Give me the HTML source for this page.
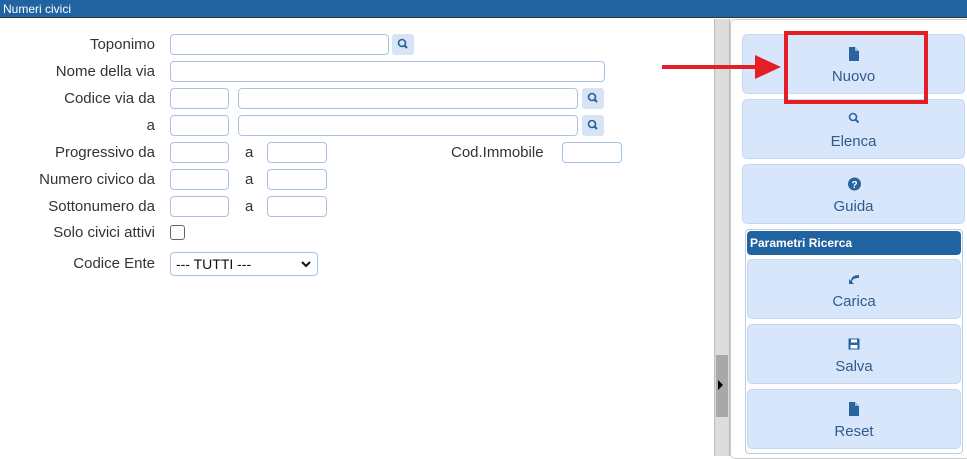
<!DOCTYPE html>
<html><head><meta charset="utf-8"><style>
*{box-sizing:border-box;margin:0;padding:0}
body{width:967px;height:456px;overflow:hidden;background:#fff;font-family:"Liberation Sans",sans-serif;position:relative}
.a{position:absolute}
.title{left:0;top:0;width:967px;height:18px;background:#2163a0;color:#fff;font-size:12px;line-height:18px;padding-left:3px;border-bottom:1px solid #333}
.lbl{font-size:15px;color:#333;text-align:right;width:160px;left:-5px;line-height:21px}
.tx{font-size:15px;line-height:21px;color:#333}
.in{border:1px solid #a9c3de;border-radius:4px;height:21px;background:#fff}
.sb{width:22px;height:21px;background:#d6e4f6;border-radius:3px}
.btn{background:#d8e6fc;border:1px solid #c6d8ef;border-radius:5px;text-align:center;color:#2f5b8d;font-size:15px}
.btn .t{position:absolute;left:0;right:0;top:33px}
.btn svg{position:absolute;left:50%;top:12px;margin-left:-6px}
</style></head><body>
<div class="a title">Numeri civici</div>

<div class="a lbl" style="top:34px">Toponimo</div>
<div class="a in" style="left:170px;top:34px;width:219px"></div>
<div class="a sb" style="left:392px;top:34px"><svg width="22" height="21"><circle cx="10" cy="9" r="3.5" fill="none" stroke="#2a5f95" stroke-width="1.6"/><line x1="12.5" y1="11.5" x2="15" y2="14" stroke="#2a5f95" stroke-width="2"/></svg></div>
<div class="a lbl" style="top:61px">Nome della via</div>
<div class="a in" style="left:170px;top:61px;width:435px"></div>
<div class="a lbl" style="top:88px">Codice via da</div>
<div class="a in" style="left:170px;top:88px;width:59px"></div>
<div class="a in" style="left:238px;top:88px;width:340px"></div>
<div class="a sb" style="left:582px;top:88px"><svg width="22" height="21"><circle cx="10" cy="9" r="3.5" fill="none" stroke="#2a5f95" stroke-width="1.6"/><line x1="12.5" y1="11.5" x2="15" y2="14" stroke="#2a5f95" stroke-width="2"/></svg></div>
<div class="a lbl" style="top:115px">a</div>
<div class="a in" style="left:170px;top:115px;width:59px"></div>
<div class="a in" style="left:238px;top:115px;width:340px"></div>
<div class="a sb" style="left:582px;top:115px"><svg width="22" height="21"><circle cx="10" cy="9" r="3.5" fill="none" stroke="#2a5f95" stroke-width="1.6"/><line x1="12.5" y1="11.5" x2="15" y2="14" stroke="#2a5f95" stroke-width="2"/></svg></div>

<div class="a lbl" style="top:142px">Progressivo da</div>
<div class="a in" style="left:170px;top:142px;width:59px"></div>
<div class="a tx" style="left:245px;top:142px">a</div>
<div class="a in" style="left:267px;top:142px;width:60px"></div>
<div class="a tx" style="left:451px;top:142px">Cod.Immobile</div>
<div class="a in" style="left:562px;top:142px;width:60px"></div>

<div class="a lbl" style="top:169px">Numero civico da</div>
<div class="a in" style="left:170px;top:169px;width:59px"></div>
<div class="a tx" style="left:245px;top:169px">a</div>
<div class="a in" style="left:267px;top:169px;width:60px"></div>
<div class="a lbl" style="top:196px">Sottonumero da</div>
<div class="a in" style="left:170px;top:196px;width:59px"></div>
<div class="a tx" style="left:245px;top:196px">a</div>
<div class="a in" style="left:267px;top:196px;width:60px"></div>
<div class="a lbl" style="top:222px">Solo civici attivi</div>
<div class="a" style="left:170px;top:225px;width:15px;height:15px;border:1px solid #666;border-radius:3px"></div>
<div class="a lbl" style="top:253px">Codice Ente</div>
<div class="a in" style="left:170px;top:252px;width:148px;height:24px;font-size:14px;line-height:22px;padding-left:5px;color:#111">--- TUTTI ---<svg style="position:absolute;right:6px;top:8px" width="10" height="7"><path d="M1 1L5 5L9 1" fill="none" stroke="#111" stroke-width="2"/></svg></div>

<div class="a" style="left:714px;top:19px;width:16px;height:437px;background:#dcdcdc;border-left:1px solid #bbb;border-right:1px solid #bbb"></div>
<div class="a" style="left:716px;top:355px;width:12px;height:62px;background:#a8a8a8"></div>
<div class="a" style="left:718px;top:380px;width:0;height:0;border-left:5px solid #000;border-top:5px solid transparent;border-bottom:5px solid transparent"></div>
<div class="a" style="left:730px;top:19px;width:240px;height:440px;border:1px solid #ccc;border-radius:5px"></div>

<div class="a btn" style="left:742px;top:34px;width:223px;height:60px"><svg width="12" height="14"><path d="M1 0H7L11 4V14H1Z" fill="#2a64a0"/><path d="M7 0V4H11" fill="#9bb8dd"/></svg><div class="t">Nuovo</div></div>
<div class="a btn" style="left:742px;top:99px;width:223px;height:60px"><svg width="12" height="14"><circle cx="5" cy="5" r="3.5" fill="none" stroke="#2a64a0" stroke-width="1.6"/><line x1="7.5" y1="7.5" x2="10.5" y2="10.5" stroke="#2a64a0" stroke-width="2"/></svg><div class="t">Elenca</div></div>
<div class="a btn" style="left:742px;top:164px;width:223px;height:60px"><svg width="13" height="14"><circle cx="6.5" cy="7" r="6.5" fill="#2a64a0"/><text x="6.5" y="11" font-size="10" font-weight="bold" fill="#fff" text-anchor="middle" font-family="Liberation Sans">?</text></svg><div class="t">Guida</div></div>

<div class="a" style="left:745px;top:229px;width:218px;height:225px;border:1px solid #b9cde4;border-radius:4px"></div>
<div class="a" style="left:747px;top:231px;width:214px;height:24px;background:#2163a0;border-radius:4px;color:#fff;font-size:12px;font-weight:bold;line-height:24px;padding-left:3px">Parametri Ricerca</div>
<div class="a btn" style="left:747px;top:259px;width:214px;height:60px"><svg width="12" height="14"><path d="M11 3C6 3 3 5 3 9L1 7L1 12L6 12L4 10C4 7 7 6 11 6Z" fill="#2a64a0"/></svg><div class="t">Carica</div></div>
<div class="a btn" style="left:747px;top:324px;width:214px;height:60px"><svg width="12" height="14"><rect x="0.5" y="1.5" width="11" height="11" fill="#2a64a0"/><rect x="3" y="2.5" width="6" height="3" fill="#fff"/><rect x="2.5" y="8" width="7" height="3.5" fill="#fff"/></svg><div class="t">Salva</div></div>
<div class="a btn" style="left:747px;top:389px;width:214px;height:60px"><svg width="12" height="14"><path d="M1 0H7L11 4V14H1Z" fill="#2a64a0"/><path d="M7 0V4H11" fill="#9bb8dd"/></svg><div class="t">Reset</div></div>

<div class="a" style="left:784px;top:31px;width:144px;height:73px;border:4px solid #e31e24"></div>
<div class="a" style="left:662px;top:65px;width:95px;height:4px;background:#e31e24"></div>
<div class="a" style="left:755px;top:55px;width:0;height:0;border-left:26px solid #e31e24;border-top:12px solid transparent;border-bottom:12px solid transparent"></div>
</body></html>
